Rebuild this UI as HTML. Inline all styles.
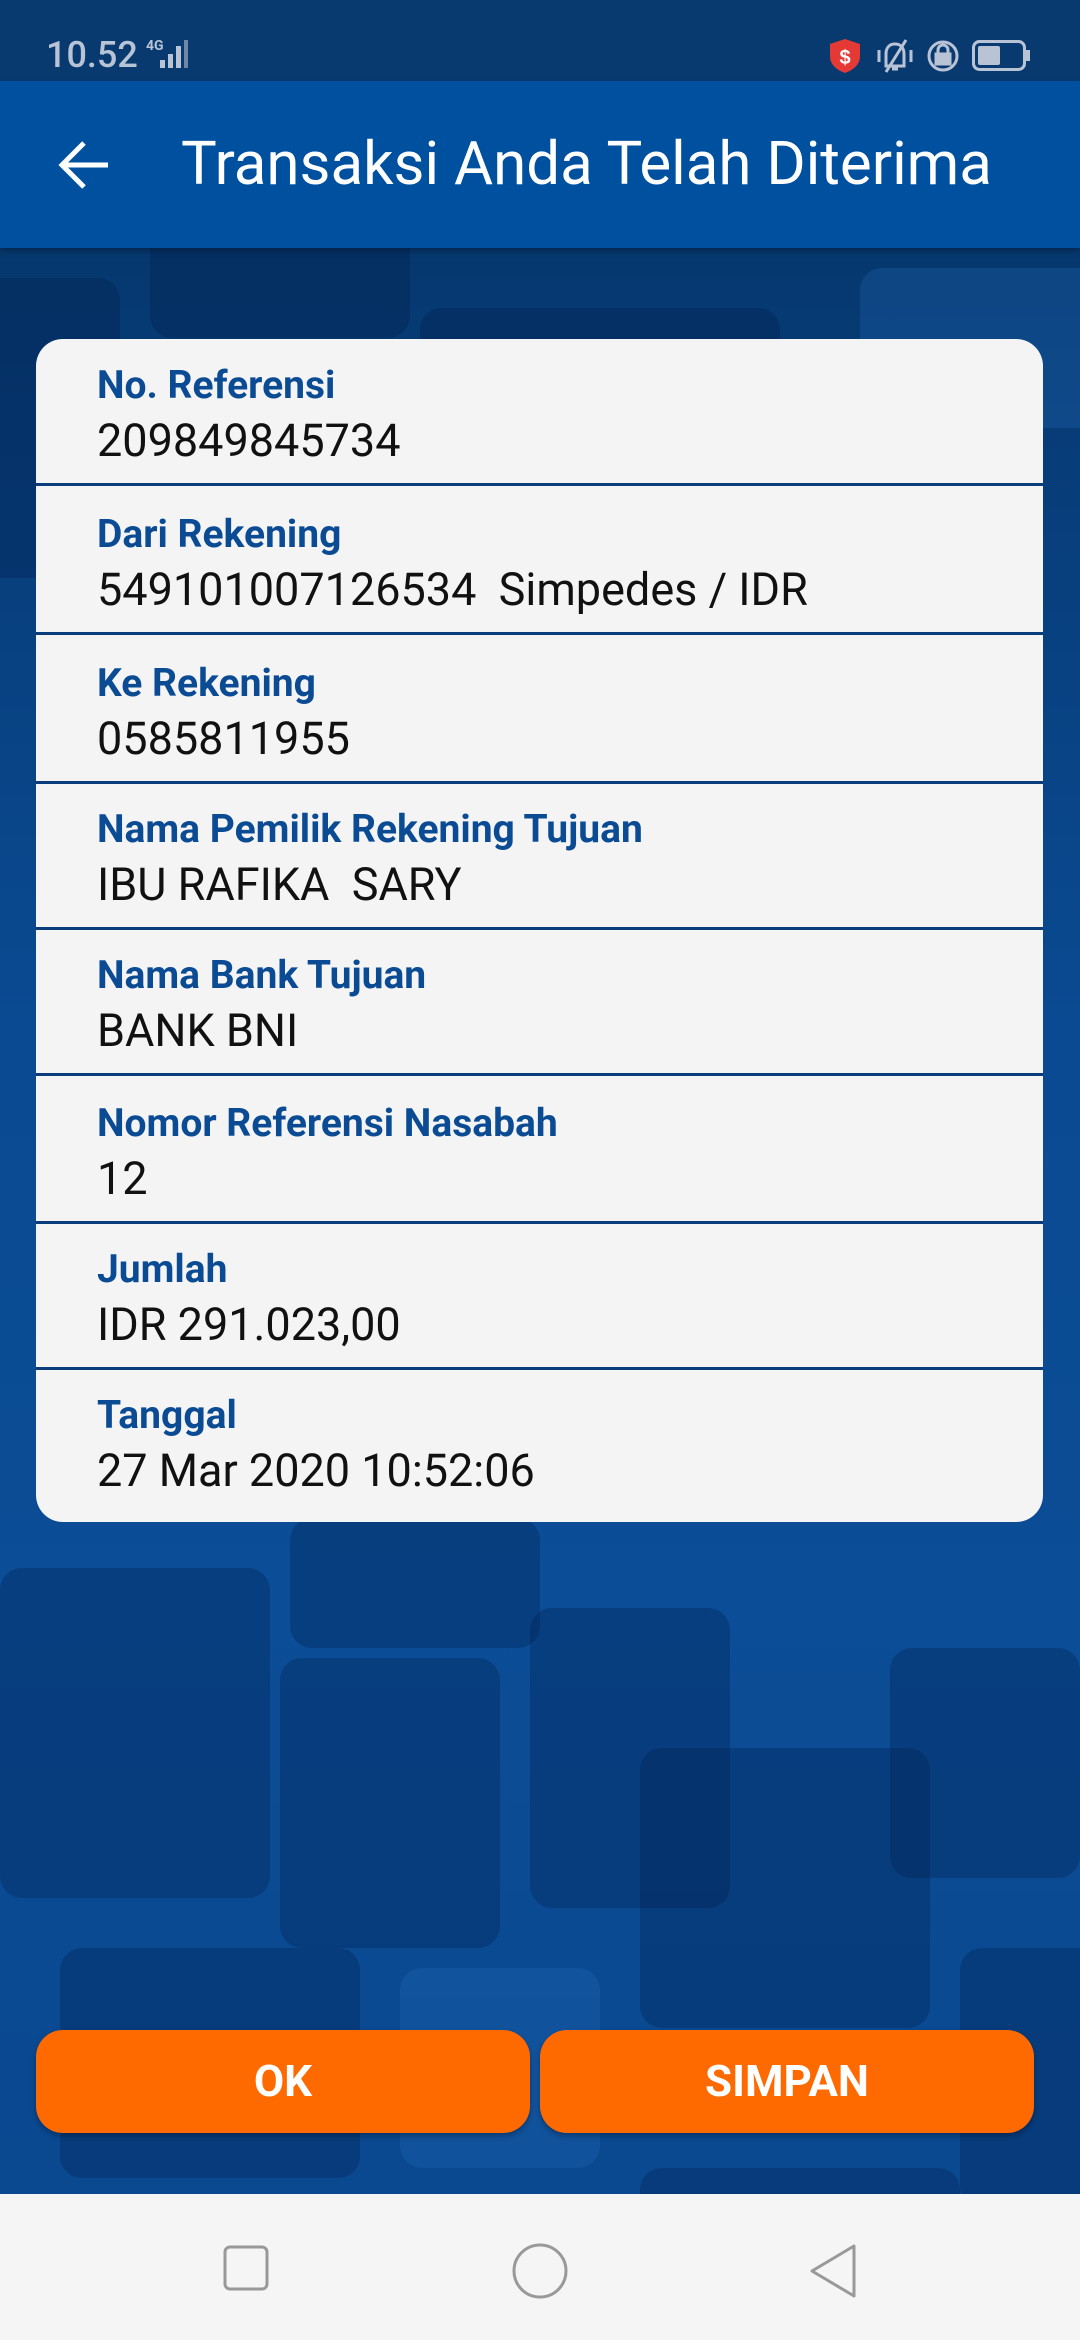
<!DOCTYPE html>
<html><head><meta charset="utf-8"><style>
*{margin:0;padding:0;box-sizing:border-box}
body{width:1080px;height:2340px;overflow:hidden;position:relative;font-family:"Roboto","Liberation Sans",sans-serif;background:#0a4a92}
.bg{position:absolute;left:0;top:248px;width:1080px;height:1946px;overflow:hidden;background:linear-gradient(180deg,#06386f 0%,#0a4a92 40%,#0b4d96 70%,#0a4890 100%)}
.sq{position:absolute;border-radius:22px;background:rgba(0,25,70,0.28)}
.sq.l{background:rgba(40,110,190,0.25)}
.status{position:absolute;left:0;top:0;width:1080px;height:81px;background:#083a70}
.header{position:absolute;left:0;top:81px;width:1080px;height:167px;background:#0050a0;box-shadow:0 3px 6px rgba(0,0,0,.3)}
.title{position:absolute;left:181px;top:50px;color:#fff;font-size:60px;line-height:66px}
.card{position:absolute;left:36px;top:339px;width:1007px;height:1183px;background:#f4f4f4;border-radius:27px;overflow:hidden}
.row{position:absolute;left:0;width:1007px;height:147px;border-bottom:3px solid #0b3d7d}
.lab{position:absolute;left:61px;top:24px;color:#0a4b94;font-weight:bold;font-size:39px;line-height:44px}
.val{position:absolute;left:61px;top:76px;color:#111;font-size:45px;line-height:52px}
.btn{position:absolute;top:2030px;height:103px;background:#ff6a00;border-radius:27px;color:#fff;font-weight:bold;font-size:44px;text-align:center;line-height:103px;box-shadow:0 3px 6px rgba(0,0,0,.3)}
.nav{position:absolute;left:0;top:2194px;width:1080px;height:146px;background:#f5f5f5}
</style></head><body>
<div class="bg">
<div class="sq" style="left:-20px;top:30px;width:140px;height:300px"></div>
<div class="sq" style="left:150px;top:-30px;width:260px;height:120px"></div>
<div class="sq" style="left:420px;top:60px;width:360px;height:200px"></div>
<div class="sq l" style="left:860px;top:20px;width:240px;height:160px"></div>
<div class="sq" style="left:290px;top:1270px;width:250px;height:130px"></div>
<div class="sq" style="left:0px;top:1320px;width:270px;height:330px"></div>
<div class="sq" style="left:280px;top:1410px;width:220px;height:290px"></div>
<div class="sq" style="left:530px;top:1360px;width:200px;height:300px"></div>
<div class="sq" style="left:640px;top:1500px;width:290px;height:280px"></div>
<div class="sq" style="left:890px;top:1400px;width:190px;height:230px"></div>
<div class="sq" style="left:960px;top:1700px;width:150px;height:260px"></div>
<div class="sq" style="left:60px;top:1700px;width:300px;height:230px"></div>
<div class="sq l" style="left:400px;top:1720px;width:200px;height:200px"></div>
<div class="sq" style="left:20px;top:1980px;width:200px;height:120px"></div>
<div class="sq" style="left:640px;top:1920px;width:320px;height:180px"></div>
</div>
<div class="status">
<div style="position:absolute;left:46px;top:34px;color:#b8c4d6;font-size:36px;line-height:42px;font-weight:500">10.52</div>
<div style="position:absolute;left:146px;top:38px;color:#b8c4d6;font-size:14px;font-weight:bold">4G</div>
<svg style="position:absolute;left:152px;top:40px" width="45" height="32"><rect x="8" y="20" width="5" height="8" fill="#b8c4d6"/><rect x="16" y="14" width="5" height="14" fill="#b8c4d6"/><rect x="24" y="6" width="5" height="22" fill="#b8c4d6"/><rect x="32" y="0" width="4" height="28" fill="#6f86a6"/></svg>
<svg style="position:absolute;left:828px;top:38px" width="34" height="36"><path d="M17 1 L32 6 V18 C32 27 25 32 17 35 C9 32 2 27 2 18 V6 Z" fill="#e53935"/><text x="17" y="26" font-size="20" font-weight="bold" fill="#fff" text-anchor="middle" font-family="Liberation Sans">$</text></svg>
<svg style="position:absolute;left:874px;top:38px" width="42" height="36" fill="none" stroke="#b8c4d6" stroke-width="3"><path d="M12 28 V16 C12 9 16 6 21 6 C26 6 30 9 30 16 V28 Z M18 31 h6 M5 12 v12 M37 12 v12 M12 34 L32 2"/></svg>
<svg style="position:absolute;left:926px;top:38px" width="34" height="36" fill="none" stroke="#b8c4d6" stroke-width="3"><circle cx="17" cy="18" r="14"/><rect x="10" y="16" width="14" height="10" fill="#b8c4d6"/><path d="M12 16 V12 a5 5 0 0 1 10 0 V16"/></svg>
<svg style="position:absolute;left:972px;top:40px" width="60" height="32"><rect x="1.5" y="1.5" width="51" height="28" rx="6" fill="none" stroke="#b8c4d6" stroke-width="3"/><rect x="6" y="6" width="22" height="19" rx="2" fill="#b8c4d6"/><rect x="54" y="10" width="4" height="11" fill="#b8c4d6"/></svg>
</div>
<div class="header">
<svg style="position:absolute;left:58px;top:60px" width="52" height="48" fill="none" stroke="#fff" stroke-width="5"><path d="M4 24 H50 M26 2 L4 24 L26 46"/></svg>
<div class="title">Transaksi Anda Telah Diterima</div>
</div>
<div class="card">
<div class="row" style="top:0"><div class="lab">No. Referensi</div><div class="val">209849845734</div></div>
<div class="row" style="top:149px"><div class="lab">Dari Rekening</div><div class="val">549101007126534&nbsp; Simpedes / IDR</div></div>
<div class="row" style="top:298px"><div class="lab">Ke Rekening</div><div class="val">0585811955</div></div>
<div class="row" style="top:444px"><div class="lab">Nama Pemilik Rekening Tujuan</div><div class="val">IBU RAFIKA&nbsp; SARY</div></div>
<div class="row" style="top:590px"><div class="lab">Nama Bank Tujuan</div><div class="val">BANK BNI</div></div>
<div class="row" style="top:738px"><div class="lab">Nomor Referensi Nasabah</div><div class="val">12</div></div>
<div class="row" style="top:884px"><div class="lab">Jumlah</div><div class="val">IDR 291.023,00</div></div>
<div class="row" style="top:1030px;border-bottom:none"><div class="lab">Tanggal</div><div class="val">27 Mar 2020 10:52:06</div></div>
</div>
<div class="btn" style="left:36px;width:494px">OK</div>
<div class="btn" style="left:540px;width:494px">SIMPAN</div>
<div class="nav">
<svg style="position:absolute;left:222px;top:50px" width="48" height="48" fill="none" stroke="#999" stroke-width="3"><rect x="3" y="3" width="42" height="42" rx="5"/></svg>
<svg style="position:absolute;left:511px;top:48px" width="58" height="58" fill="none" stroke="#999" stroke-width="3"><circle cx="29" cy="29" r="26"/></svg>
<svg style="position:absolute;left:808px;top:48px" width="52" height="58" fill="none" stroke="#999" stroke-width="3" stroke-linejoin="round"><path d="M4 29 L46 4 V54 Z"/></svg>
</div>
</body></html>
